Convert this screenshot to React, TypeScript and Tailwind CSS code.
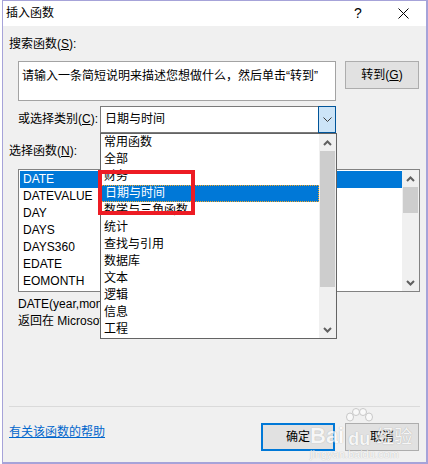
import React from 'react';

const categories = ['常用函数', '全部', '财务', '日期与时间', '数学与三角函数', '统计', '查找与引用', '数据库', '文本', '逻辑', '信息', '工程'];
const functions = ['DATE', 'DATEVALUE', 'DAY', 'DAYS', 'DAYS360', 'EDATE', 'EOMONTH'];

const ArrowUp = () => (
    <svg width="9" height="6" viewBox="0 0 9 6">
        <path d="M1 5 L4.5 1.5 L8 5" stroke="#606060" strokeWidth="2" fill="none" />
    </svg>
);

const ArrowDown = () => (
    <svg width="9" height="6" viewBox="0 0 9 6">
        <path d="M1 1 L4.5 4.5 L8 1" stroke="#606060" strokeWidth="2" fill="none" />
    </svg>
);

const Paw = () => (
    <svg width="30" height="22" viewBox="0 0 30 22">
        <g fill="#ffffff" fillOpacity="0.85" stroke="#b8b8b8" strokeWidth="1">
            <ellipse cx="6" cy="9" rx="3.5" ry="4" />
            <ellipse cx="12" cy="4" rx="3.5" ry="3.5" />
            <ellipse cx="19" cy="4" rx="3.5" ry="3.5" />
            <ellipse cx="25" cy="9" rx="3.5" ry="4" />
        </g>
    </svg>
);

export default function App() {
    return (
        <div className="relative w-[428px] h-[464px] bg-white font-['Liberation_Sans','Noto_Sans_CJK_SC',sans-serif] text-[12px] leading-[17px] text-black">
            <div className="ml-[2px] w-[426px] h-[464px] flex flex-col border-t border-l border-r-2 border-b-2 border-[#a6a3d9]">
                {/* Title bar */}
                <div className="h-[25px] bg-white flex items-center pl-[3px]">
                    <span className="flex-1">插入函数</span>
                    <span className="text-[14px] w-[12px] text-center">?</span>
                    <div className="ml-[34px] mr-[17px] w-[11px] flex justify-center">
                        <svg width="11" height="11" viewBox="0 0 11 11">
                            <path d="M0.5 0.5 L10.5 10.5 M10.5 0.5 L0.5 10.5" stroke="#000" strokeWidth="1" />
                        </svg>
                    </div>
                </div>

                {/* Body */}
                <div className="flex-1 bg-[#f0f0f0] flex flex-col pl-[6px] pr-[6px]">
                    <div className="mt-[10px]">搜索函数(<span className="underline">S</span>):</div>

                    <div className="mt-[8px] ml-[9px] flex items-start gap-[9px]">
                        <div className="w-[318px] h-[40px] bg-white border border-[#a3a3a3] px-[3px] pt-[6px] whitespace-nowrap">
                            请输入一条简短说明来描述您想做什么，然后单击“转到”
                        </div>
                        <div className="w-[74px] h-[28px] bg-[#e1e1e1] border border-[#adadad] flex items-center justify-center">
                            转到(<span className="underline">G</span>)
                        </div>
                    </div>

                    <div className="mt-[5px] ml-[9px] h-[27px] flex items-center">
                        <span className="w-[82px]">或选择类别(<span className="underline">C</span>):</span>
                        <div className="relative w-[236px] h-[27px] bg-white border border-[#7a7a7a] flex">
                            <span className="flex-1 pl-[4px] leading-[25px]">日期与时间</span>
                            <div className="w-[18px] -my-px -mr-px bg-[#cce4f7] border border-[#005499] flex items-center justify-center">
                                <svg width="9" height="5" viewBox="0 0 9 5">
                                    <path d="M0.5 0.5 L4.5 4.5 L8.5 0.5" stroke="#3c3c3c" strokeWidth="1" fill="none" />
                                </svg>
                            </div>

                            {/* Category dropdown */}
                            <div className="absolute z-10 left-[-1px] top-[26px] w-[237px] h-[206px] bg-white border border-[#646464] flex">
                                <div className="flex-1 flex flex-col">
                                    {categories.map(c => (
                                        <div
                                            key={c}
                                            className={`h-[17px] pl-[3px] ${c === '日期与时间'
                                                ? 'bg-[#0078d7] text-white border border-dotted border-[#f5a623] leading-[15px] pl-[2px]'
                                                : ''}`}
                                        >
                                            {c}
                                        </div>
                                    ))}
                                </div>
                                <div className="w-[17px] bg-[#f0f0f0] flex flex-col">
                                    <div className="h-[17px] flex items-center justify-center"><ArrowUp /></div>
                                    <div className="h-[136px] mx-px bg-[#cdcdcd]" />
                                    <div className="flex-1" />
                                    <div className="h-[17px] flex items-center justify-center"><ArrowDown /></div>
                                </div>
                            </div>
                        </div>
                    </div>

                    <div className="mt-[10px]">选择函数(<span className="underline">N</span>):</div>

                    <div className="mt-[9px] ml-[9px] w-[402px] h-[123px] bg-white border border-[#828282] flex">
                        <div className="flex-1 flex flex-col pt-px pl-px">
                            {functions.map((f, i) => (
                                <div key={f} className={`h-[17px] pl-[3px] ${i === 0 ? 'bg-[#0078d7] text-white' : ''}`}>{f}</div>
                            ))}
                        </div>
                        <div className="w-[17px] bg-[#f0f0f0] flex flex-col">
                            <div className="h-[17px] flex items-center justify-center"><ArrowUp /></div>
                            <div className="h-[26px] mx-px bg-[#cdcdcd]" />
                            <div className="flex-1" />
                            <div className="h-[17px] flex items-center justify-center"><ArrowDown /></div>
                        </div>
                    </div>

                    {/* description, partly hidden behind the open dropdown */}
                    <div className="mt-[4px] ml-[9px] w-[82px] overflow-hidden whitespace-nowrap">DATE(year,month,day)</div>
                    <div className="ml-[9px] w-[82px] overflow-hidden whitespace-nowrap">返回在 Microsoft Office Excel 日期时间代码中代表日期的数字</div>

                    <div className="mt-[76px] w-[411px] h-px bg-[#dadada]" />

                    <div className="mt-[16px] flex items-start">
                        <span className="mt-px flex-1 text-[#0066cc] underline">有关该函数的帮助</span>
                        <div className="w-[74px] h-[28px] bg-[#e1e1e1] border-2 border-[#0078d7] flex items-center justify-center">确定</div>
                        <div className="ml-[10px] mr-px w-[74px] h-[28px] bg-[#e1e1e1] border border-[#adadad] flex items-center justify-center">取消</div>
                    </div>
                </div>
            </div>

            {/* Red annotation box */}
            <div className="absolute z-20 left-[98px] top-[170px] w-[97px] h-[45px] border-4 border-[#ed1c24]" />

            {/* Watermark */}
            <div className="absolute z-20 left-[310px] top-[408px] flex flex-col items-start opacity-70 pointer-events-none">
                <div className="flex items-end">
                    <span className="text-[22px] leading-[24px] font-bold text-white [text-shadow:0_0_1px_#8a8a8a]">Bai</span>
                    <div className="flex flex-col items-center">
                        <Paw />
                        <span className="text-[18px] leading-[18px] font-bold text-white [text-shadow:0_0_1px_#8a8a8a]">du</span>
                    </div>
                    <span className="ml-[2px] text-[18px] leading-[22px] text-white [text-shadow:0_0_1px_#8a8a8a]">经验</span>
                </div>
                <span className="text-[11px] leading-[12px] text-white [text-shadow:0_0_1px_#8a8a8a]">jingyan.baidu.com</span>
            </div>
        </div>
    );
}
